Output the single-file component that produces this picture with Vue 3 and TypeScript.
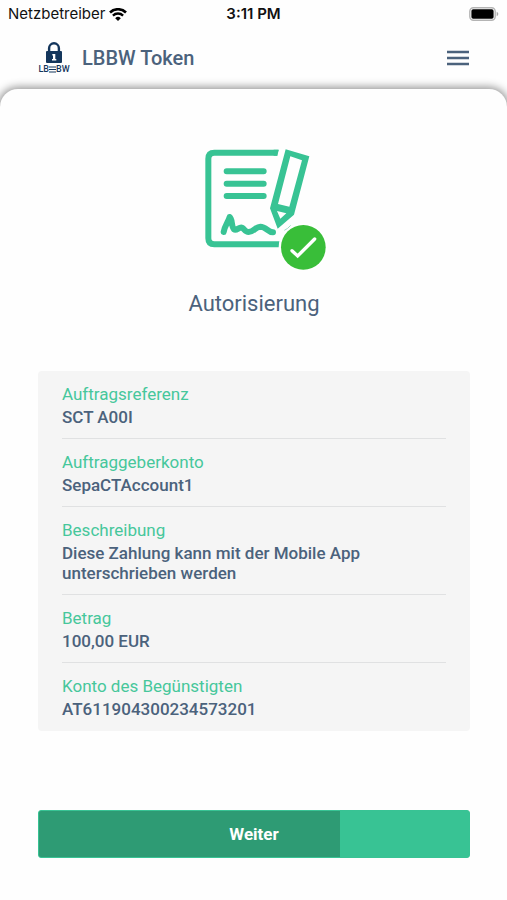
<script setup lang="ts">
interface Detail {
  label: string
  value: string
}

const details: Detail[] = [
  { label: 'Auftragsreferenz', value: 'SCT A00I' },
  { label: 'Auftraggeberkonto', value: 'SepaCTAccount1' },
  { label: 'Beschreibung', value: 'Diese Zahlung kann mit der Mobile App unterschrieben werden' },
  { label: 'Betrag', value: '100,00 EUR' },
  { label: 'Konto des Begünstigten', value: 'AT611904300234573201' },
]

const progress = 70
</script>

<template>
  <div class="screen">
    <div class="status">
      <div class="carrier">
        <span>Netzbetreiber</span>
        <svg class="wifi" width="18" height="13" viewBox="0 0 18 13" aria-hidden="true">
          <path d="M1 4.5a11.4 11.4 0 0 1 16 0" fill="none" stroke="#000" stroke-width="2.6" />
          <path d="M3.9 7.6a7.3 7.3 0 0 1 10.2 0" fill="none" stroke="#000" stroke-width="2.3" />
          <path d="M9 13 6.2 10.2a4 4 0 0 1 5.6 0z" fill="#000" />
        </svg>
      </div>
      <span class="time">3:11 PM</span>
      <svg class="battery" width="30" height="14" viewBox="0 0 30 14" aria-hidden="true">
        <rect x="0.8" y="0.8" width="25.4" height="12.4" rx="3.6" fill="#fff" stroke="#b4b4b4" stroke-width="1.4" />
        <rect x="2.4" y="2.3" width="22.2" height="9.4" rx="1.8" fill="#000" />
        <path d="M27.7 4.8c2.1.8 2.1 3.6 0 4.4z" fill="#a9a9a9" />
      </svg>
    </div>

    <header class="header">
      <div class="logo">
        <svg width="18" height="22" viewBox="0 0 18 22" aria-hidden="true">
          <path d="M4.1 10V6.2a4.9 4.9 0 0 1 9.8 0V10" fill="none" stroke="#14365c" stroke-width="2.4" />
          <rect x="1" y="9" width="16" height="12" rx="1" fill="#14365c" />
          <path d="M7.3 12h3v5h1v1.4H7V17h1v-3.400h-.7z" fill="#fff" />
        </svg>
        <div class="wordmark">
          <span>LB</span>
          <svg width="7" height="7" viewBox="0 0 7 7" aria-hidden="true">
            <path d="M0 1h7M0 3.500h7M0 6h7" stroke="#14365c" stroke-width="1.2" />
          </svg>
          <span>BW</span>
        </div>
      </div>
      <h1 class="title">LBBW Token</h1>
      <button class="menu" type="button" aria-label="Menü">
        <svg width="24" height="18" viewBox="0 0 24 18" aria-hidden="true">
          <path d="M1 3h22M1 9h22M1 15h22" stroke="#4b627c" stroke-width="2.4" />
        </svg>
      </button>
    </header>

    <main class="sheet">
      <svg class="illustration" width="150" height="122" viewBox="-34 39 450 366" aria-hidden="true">
        <g fill="none" stroke="#38c394" stroke-width="18">
          <path d="M263 53H72Q54 53 54 71V310Q54 328 72 328H268" />
          <path d="M109 109H220M109 146H220M109 183H220" stroke-linecap="round" />
          <path
            d="M100 291C103 272 115 259 118 246C127 252 122 274 131 283C139 289 147 274 155 278C163 282 163 291 175 291C191 291 194 276 210 275C228 275 232 292 248 292"
            stroke-linecap="round" stroke-linejoin="round" />
        </g>
        <path d="M264 44 261 62H290V40z" fill="#fff" />
        <path d="M263 44H266L260 62H250V44z" fill="#38c394" />
        <path
          fill="#38c394" fill-rule="evenodd"
          d="M286 43 357 64 311 239 262 281 239 220zM300 64 263 207 297 215 335 76zM260 228 270 251 288 235z" />
        <circle cx="339" cy="337" r="74" fill="#fff" />
        <path d="M282 286Q292 282 301 271" fill="none" stroke="#9fdcc7" stroke-width="3" />
        <circle cx="339" cy="337" r="67" fill="#39be39" />
        <path d="M305 347 322 363 373 312" fill="none" stroke="#fff" stroke-width="10" stroke-linecap="round" />
      </svg>

      <h2 class="heading">Autorisierung</h2>

      <dl class="details">
        <div v-for="item in details" :key="item.label" class="item">
          <dt>{{ item.label }}</dt>
          <dd>{{ item.value }}</dd>
        </div>
      </dl>

      <button class="next" type="button">
        <span class="fill" :style="{ width: progress + '%' }"></span>
        <span class="next-label">Weiter</span>
      </button>
    </main>
  </div>
</template>

<style>
body {
  margin: 0;
  background: #fff;
}
</style>

<style scoped>
.screen {
  min-height: 100vh;
  display: flex;
  flex-direction: column;
  overflow: hidden;
  background: #fefefe;
  color: #4b627c;
  font-family: Roboto, "Liberation Sans", sans-serif;
}

.status {
  display: grid;
  grid-template-columns: 1fr auto 1fr;
  align-items: center;
  height: 28px;
  padding: 0 8px;
  color: #111;
  font-family: Inter, "Liberation Sans", sans-serif;
  font-size: 15px;
  line-height: 20px;
}

.carrier {
  display: flex;
  align-items: center;
  gap: 4px;
}

.time {
  font-weight: 600;
}

.battery {
  justify-self: end;
}

.header {
  display: flex;
  align-items: center;
  height: 60px;
  padding: 0 37px 0 38px;
}

.logo {
  display: flex;
  flex-direction: column;
  align-items: center;
  width: 32px;
}

.wordmark {
  display: flex;
  align-items: center;
  color: #14365c;
  font-size: 9px;
  font-weight: 500;
  line-height: 10px;
}

.title {
  flex: 1;
  margin: 0 0 0 12px;
  font-size: 20px;
  font-weight: 500;
  line-height: 24px;
}

.menu {
  display: flex;
  padding: 0;
  border: 0;
  background: none;
}

.sheet {
  flex: 1;
  display: flex;
  flex-direction: column;
  margin-top: 1px;
  padding: 59px 37px 42px 38px;
  border-radius: 18px 18px 0 0;
  background: #fefefe;
  box-shadow: 0 0 8px 2px rgba(0, 0, 0, 0.42);
}

.illustration {
  align-self: center;
}

.heading {
  margin: 20px 0 53px;
  font-size: 22px;
  font-weight: 400;
  line-height: 28px;
  text-align: center;
}

.details {
  margin: 0;
  padding: 0 24px 1px;
  border-radius: 4px;
  background: #f5f5f5;
  font-size: 17px;
}

.item {
  padding: 12px 0 11px;
  border-bottom: 1px solid #e0e1e2;
}

.item:last-child {
  border-bottom: 0;
}

dt {
  margin-bottom: 2px;
  color: #46c79b;
  line-height: 22px;
}

dd {
  margin: 0;
  font-weight: 500;
  line-height: 20px;
}

.next {
  position: relative;
  height: 48px;
  margin-top: auto;
  padding: 0;
  overflow: hidden;
  border: 1px solid #38c394;
  border-radius: 3px;
  background: #38c394;
  color: #fff;
  font-family: inherit;
  font-size: 17px;
  font-weight: 700;
  line-height: 24px;
}

.fill {
  position: absolute;
  top: 0;
  bottom: 0;
  left: 0;
  background: #2e9b74;
}

.next-label {
  position: relative;
}
</style>
